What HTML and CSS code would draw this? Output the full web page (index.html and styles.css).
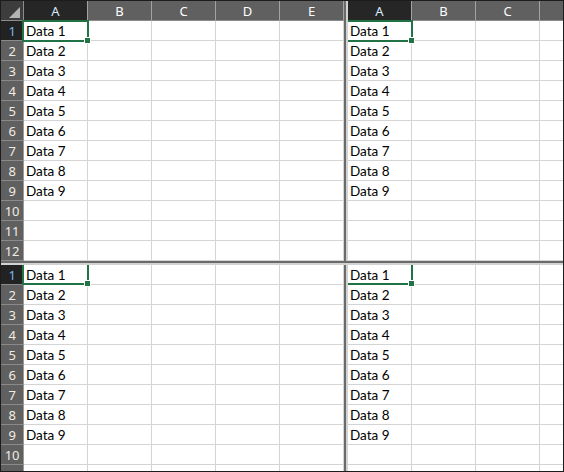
FILE: index.html
```html
<!DOCTYPE html>
<html>
<head>
<meta charset="utf-8">
<title>Split sheet</title>
<link rel="stylesheet" href="styles.css">
</head>
<body>
<div class="sheet">
  <section class="pane">
    <div class="colhead">
      <div class="corner"><svg width="23" height="19" viewBox="0 0 23 19"><polygon points="8,17 19,6 19,17" fill="#b3b3b3"/></svg></div>
      <div class="ch ch-sel">A</div><div class="ch">B</div><div class="ch">C</div><div class="ch">D</div><div class="ch">E</div>
    </div>
    <div class="row"><div class="rh rh-sel">1</div><div class="cells"><span class="cell">Data 1</span></div></div>
    <div class="row"><div class="rh">2</div><div class="cells"><span class="cell">Data 2</span></div></div>
    <div class="row"><div class="rh">3</div><div class="cells"><span class="cell">Data 3</span></div></div>
    <div class="row"><div class="rh">4</div><div class="cells"><span class="cell">Data 4</span></div></div>
    <div class="row"><div class="rh">5</div><div class="cells"><span class="cell">Data 5</span></div></div>
    <div class="row"><div class="rh">6</div><div class="cells"><span class="cell">Data 6</span></div></div>
    <div class="row"><div class="rh">7</div><div class="cells"><span class="cell">Data 7</span></div></div>
    <div class="row"><div class="rh">8</div><div class="cells"><span class="cell">Data 8</span></div></div>
    <div class="row"><div class="rh">9</div><div class="cells"><span class="cell">Data 9</span></div></div>
    <div class="row"><div class="rh">10</div><div class="cells"></div></div>
    <div class="row"><div class="rh">11</div><div class="cells"></div></div>
    <div class="row"><div class="rh">12</div><div class="cells"></div></div>
    <div class="sel sel-tl"><span class="handle"></span></div>
  </section>
  <div class="vsplit"></div>
  <section class="pane">
    <div class="colhead">
      <div class="ch ch-sel">A</div><div class="ch">B</div><div class="ch">C</div><div class="ch"></div>
    </div>
    <div class="row"><div class="cells"><span class="cell">Data 1</span></div></div>
    <div class="row"><div class="cells"><span class="cell">Data 2</span></div></div>
    <div class="row"><div class="cells"><span class="cell">Data 3</span></div></div>
    <div class="row"><div class="cells"><span class="cell">Data 4</span></div></div>
    <div class="row"><div class="cells"><span class="cell">Data 5</span></div></div>
    <div class="row"><div class="cells"><span class="cell">Data 6</span></div></div>
    <div class="row"><div class="cells"><span class="cell">Data 7</span></div></div>
    <div class="row"><div class="cells"><span class="cell">Data 8</span></div></div>
    <div class="row"><div class="cells"><span class="cell">Data 9</span></div></div>
    <div class="row"><div class="cells"></div></div>
    <div class="row"><div class="cells"></div></div>
    <div class="row"><div class="cells"></div></div>
    <div class="sel sel-tr"><span class="handle"></span></div>
  </section>
  <div class="hsplit"></div>
  <section class="pane">
    <div class="row"><div class="rh rh-sel">1</div><div class="cells"><span class="cell">Data 1</span></div></div>
    <div class="row"><div class="rh">2</div><div class="cells"><span class="cell">Data 2</span></div></div>
    <div class="row"><div class="rh">3</div><div class="cells"><span class="cell">Data 3</span></div></div>
    <div class="row"><div class="rh">4</div><div class="cells"><span class="cell">Data 4</span></div></div>
    <div class="row"><div class="rh">5</div><div class="cells"><span class="cell">Data 5</span></div></div>
    <div class="row"><div class="rh">6</div><div class="cells"><span class="cell">Data 6</span></div></div>
    <div class="row"><div class="rh">7</div><div class="cells"><span class="cell">Data 7</span></div></div>
    <div class="row"><div class="rh">8</div><div class="cells"><span class="cell">Data 8</span></div></div>
    <div class="row"><div class="rh">9</div><div class="cells"><span class="cell">Data 9</span></div></div>
    <div class="row"><div class="rh">10</div><div class="cells"></div></div>
    <div class="row"><div class="rh"></div><div class="cells"></div></div>
    <div class="sel sel-bl"><span class="handle"></span></div>
  </section>
  <div class="vsplit"></div>
  <section class="pane">
    <div class="row"><div class="cells"><span class="cell">Data 1</span></div></div>
    <div class="row"><div class="cells"><span class="cell">Data 2</span></div></div>
    <div class="row"><div class="cells"><span class="cell">Data 3</span></div></div>
    <div class="row"><div class="cells"><span class="cell">Data 4</span></div></div>
    <div class="row"><div class="cells"><span class="cell">Data 5</span></div></div>
    <div class="row"><div class="cells"><span class="cell">Data 6</span></div></div>
    <div class="row"><div class="cells"><span class="cell">Data 7</span></div></div>
    <div class="row"><div class="cells"><span class="cell">Data 8</span></div></div>
    <div class="row"><div class="cells"><span class="cell">Data 9</span></div></div>
    <div class="row"><div class="cells"></div></div>
    <div class="row"><div class="cells"></div></div>
    <div class="sel sel-br"><span class="handle"></span></div>
  </section>
</div>
</body>
</html>
```
FILE: styles.css
```css
* { box-sizing: border-box; }
html, body { margin: 0; padding: 0; background: #ffffff; }

.sheet {
  display: grid;
  grid-template-columns: 343px 4px 215px;
  grid-template-rows: 260px 4px 206px;
  width: 564px;
  height: 472px;
  border: 1px solid #1c1c1c;
  background: #ffffff;
}

.pane {
  position: relative;
  overflow: hidden;
  background: #ffffff;
  display: flex;
  flex-direction: column;
}

.vsplit {
  border-left: 2px solid #6a6a6a;
  background: #d2d2d2;
}
.hsplit {
  grid-column: 1 / -1;
  border-top: 2px solid #6a6a6a;
  background: #d2d2d2;
}

.colhead {
  display: flex;
  flex: none;
  height: 20px;
  font-family: "Noto Sans", "DejaVu Sans", sans-serif;
  font-size: 13px;
  color: #ffffff;
}
.corner {
  flex: none;
  width: 23px;
  height: 20px;
  background: #3d3d3d;
  border-bottom: 1px solid #8c8c8c;
  border-right: 1px solid #8c8c8c;
}
.corner svg { display: block; }
.ch {
  flex: none;
  width: 64px;
  height: 20px;
  background: #606060;
  border-right: 1px solid #a3a3a3;
  border-bottom: 1px solid #8c8c8c;
  display: flex;
  align-items: center;
  justify-content: center;
}
.ch-sel {
  background: #262626;
  color: #d8eaff;
}

.row {
  display: flex;
  flex: none;
  height: 20px;
}
.rh {
  flex: none;
  width: 23px;
  height: 20px;
  background: #606060;
  border-right: 1px solid #9a9a9a;
  border-bottom: 1px solid #8a8a8a;
  font-family: "Noto Sans", "DejaVu Sans", sans-serif;
  font-size: 13px;
  color: #f0ece4;
  display: flex;
  align-items: center;
  justify-content: center;
  letter-spacing: -0.3px;
}
.rh-sel {
  background: #222222;
  color: #78b8f0;
}
.cells {
  flex: 1;
  height: 20px;
  border-bottom: 1px solid #d4d4d4;
  background: repeating-linear-gradient(to right, transparent 0 63px, #d4d4d4 63px 64px);
}
.cell {
  display: block;
  width: 63px;
  padding-left: 2px;
  font-family: Lato, "Open Sans", sans-serif;
  font-size: 13.5px;
  line-height: 20px;
  color: #000000;
  white-space: nowrap;
}

.sel {
  position: absolute;
  border: 2px solid #217346;
  width: 67px;
  height: 22px;
}
.sel-tl { left: 21px; top: 19px; }
.sel-tr { left: -1px; top: 19px; border-left: 0; width: 66px; }
.sel-bl { left: 21px; top: -1px; border-top: 0; height: 21px; }
.sel-br { left: -1px; top: -1px; border-left: 0; border-top: 0; width: 66px; height: 21px; }
.handle {
  position: absolute;
  right: -4px;
  bottom: -4px;
  width: 7px;
  height: 7px;
  background: #217346;
  border: 1px solid #ffffff;
}
```
